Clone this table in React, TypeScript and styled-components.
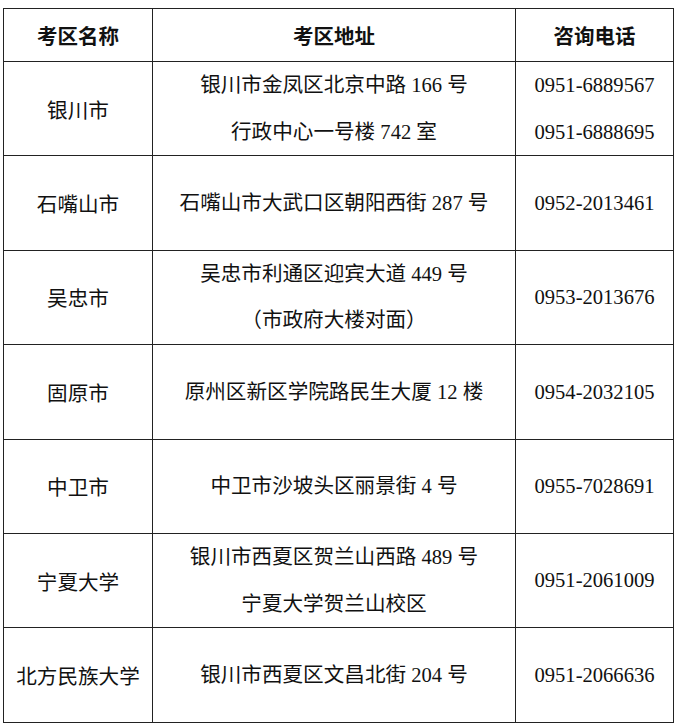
import React from "react";
import styled, { createGlobalStyle } from "styled-components";

const GlobalStyle = createGlobalStyle`
  html, body {
    margin: 0;
    padding: 0;
    background: #ffffff;
  }
  body {
    font-family: "Liberation Serif", "Noto Sans CJK SC", serif;
    color: #111111;
  }
`;

const Page = styled.div`
  padding: 8px 0 0 3px;
  width: 675px;
  box-sizing: border-box;
`;

const Table = styled.table`
  border-collapse: collapse;
  table-layout: fixed;
  width: 670px;
`;

const Col = styled.col<{ $w: number }>`
  width: ${(p) => p.$w}px;
`;

const HeadCell = styled.th`
  border: 1px solid #222222;
  height: 52px;
  padding: 0;
  font-family: "Noto Sans CJK SC", sans-serif;
  font-weight: 700;
  font-size: 20.5px;
  text-align: center;
  vertical-align: middle;
  color: #111111;
`;

const Row = styled.tr``;

const Cell = styled.td`
  border: 1px solid #222222;
  height: 93.4px;
  padding: 0;
  text-align: center;
  vertical-align: middle;
  font-size: 20.6px;
  white-space: nowrap;
`;

const Line = styled.div`
  line-height: 46.5px;
  height: 46.5px;
`;

type Entry = {
  name: string;
  address: string[];
  phones: string[];
};

const data: Entry[] = [
  {
    name: "银川市",
    address: ["银川市金凤区北京中路 166 号", "行政中心一号楼 742 室"],
    phones: ["0951-6889567", "0951-6888695"],
  },
  {
    name: "石嘴山市",
    address: ["石嘴山市大武口区朝阳西街 287 号"],
    phones: ["0952-2013461"],
  },
  {
    name: "吴忠市",
    address: ["吴忠市利通区迎宾大道 449 号", "（市政府大楼对面）"],
    phones: ["0953-2013676"],
  },
  {
    name: "固原市",
    address: ["原州区新区学院路民生大厦 12 楼"],
    phones: ["0954-2032105"],
  },
  {
    name: "中卫市",
    address: ["中卫市沙坡头区丽景街 4 号"],
    phones: ["0955-7028691"],
  },
  {
    name: "宁夏大学",
    address: ["银川市西夏区贺兰山西路 489 号", "宁夏大学贺兰山校区"],
    phones: ["0951-2061009"],
  },
  {
    name: "北方民族大学",
    address: ["银川市西夏区文昌北街 204 号"],
    phones: ["0951-2066636"],
  },
];

export default function App() {
  return (
    <>
      <GlobalStyle />
      <Page>
        <Table>
          <colgroup>
            <Col $w={149} />
            <Col $w={363} />
            <Col $w={158} />
          </colgroup>
          <thead>
            <tr>
              <HeadCell>考区名称</HeadCell>
              <HeadCell>考区地址</HeadCell>
              <HeadCell>咨询电话</HeadCell>
            </tr>
          </thead>
          <tbody>
            {data.map((d) => (
              <Row key={d.name}>
                <Cell>{d.name}</Cell>
                <Cell>
                  {d.address.map((a) => (
                    <Line key={a}>{a}</Line>
                  ))}
                </Cell>
                <Cell>
                  {d.phones.map((p) => (
                    <Line key={p}>{p}</Line>
                  ))}
                </Cell>
              </Row>
            ))}
          </tbody>
        </Table>
      </Page>
    </>
  );
}
